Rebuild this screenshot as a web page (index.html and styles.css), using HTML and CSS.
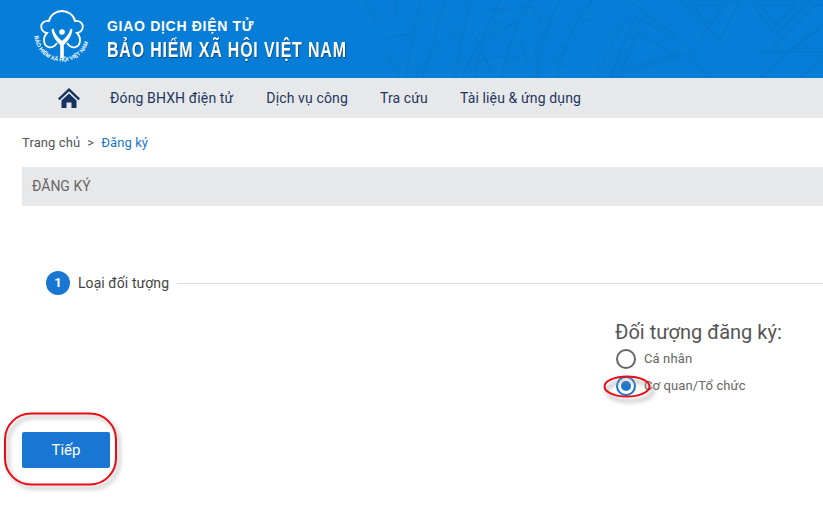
FILE: index.html
```html
<!DOCTYPE html>
<html lang="vi">
<head>
<meta charset="utf-8">
<title>Đăng ký</title>
<link rel="stylesheet" href="styles.css">
</head>
<body>
<header class="banner">
  <svg class="pattern" width="823" height="78" viewBox="0 0 823 78" fill="none" stroke="#0a77cb" stroke-width="1.200">
    <path d="M365 0l12 24M420 0l-6 30-8 48M445 0l-22 78M440 40l-25 38M470 0l-16 78M478 43l-16 35M395 0v20M380 40l30 -6M385 50l15 28"/>
    <path d="M460 45l-16-24M500 0c-14 26-22 50-25 78M530 0c-16 26-24 50-28 78M472 30l22 48"/>
    <path d="M483 10l50-3 12 24-10 20 5 27M495 20l30 10M490 40l25-18M505 50l15 10M520 40l10 25M480 60l30-5"/>
    <path d="M560 0c-12 22-20 50-24 78M592 0c-18 22-30 50-34 78M575 15l14 6M565 30l14 6M558 45l14 6M553 60l14 6"/>
    <path d="M610 78l25-62 60 35zM622 70l15-38 38 22zM600 78l-3-6 30-55M628 0l47 35M680 0l60 0-20 40zM692 5l30 0-12 22zM730 0l-30 38"/>
    <path d="M750 0l60 0-35 35zM760 5l36 0-20 20zM770 50l45-45 8 0M760 78l63-55M800 78l23-18M760 52l63 0M690 60l20 18"/>
    <path d="M820 30l-30 18 33 0"/>
  </svg>
  <svg class="logo" width="64" height="64" viewBox="0 0 64 64" aria-hidden="true">
    <defs><path id="ring" d="M1.500 28a27.500 27.500 0 0 0 55 0"/></defs>
    <path d="M24 37C19 44 11 42 11 34C11 31 12 29 14 27C6 26 6 14 16 15C17 9 23 5 29 5C35 5 41 9 42 15C52 14 52 26 44 27C46 29 47 31 47 34C47 42 39 44 34 37" fill="none" stroke="#fff" stroke-width="1.800"/>
    <path d="M18.500 23.500L20.500 22.500C22 29 26 32 29 35C32 32 36 29 37.500 22.500L39.500 23.500C38.500 31 34 36 30.800 39V52H27.200V39C24 36 19.500 31 18.500 23.500z" fill="#fff"/>
    <circle cx="29" cy="26" r="2.800" fill="#fff"/>
    <text class="logo-ring" fill="#fff"><textPath href="#ring" startOffset="2">BẢO HIỂM XÃ HỘI VIỆT NAM</textPath></text>
  </svg>
  <div class="brand">
    <div class="brand-top">GIAO DỊCH ĐIỆN TỬ</div>
    <div class="brand-main">BẢO HIỂM XÃ HỘI VIỆT NAM</div>
  </div>
</header>

<nav class="menu">
  <svg class="home" width="22" height="20" viewBox="0 0 22 20" aria-hidden="true">
    <path d="M11 0L0 10.500l1.600 1.700L11 3.300l9.400 8.900 1.600-1.700z" fill="#14315f"/>
    <path d="M3.500 12.500L11 5.500l7.500 7V20h-5v-5.500h-5V20h-5z" fill="#14315f"/>
  </svg>
  <a class="menu-item">Đóng BHXH điện tử</a>
  <a class="menu-item">Dịch vụ công</a>
  <a class="menu-item">Tra cứu</a>
  <a class="menu-item">Tài liệu &amp; ứng dụng</a>
</nav>

<main class="content">
  <div class="crumbs"><span>Trang chủ</span><span class="sep">&gt;</span><span class="current">Đăng ký</span></div>
  <h1 class="title">ĐĂNG KÝ</h1>
  <div class="step">
    <span class="step-num">1</span>
    <span class="step-label">Loại đối tượng</span>
    <span class="step-line"></span>
  </div>
  <div class="form-row">
    <div class="choices">
      <div class="choices-title">Đối tượng đăng ký:</div>
      <div class="radio-row"><span class="radio"></span><span>Cá nhân</span></div>
      <div class="radio-row"><span class="radio on"></span><span>Cơ quan/Tổ chức</span></div>
    </div>
  </div>
  <button class="next">Tiếp</button>
</main>

<svg class="marks" width="823" height="507" viewBox="0 0 823 507" fill="none" aria-hidden="true">
  <defs><filter id="soft" x="-20%" y="-30%" width="140%" height="170%"><feGaussianBlur stdDeviation="2"/></filter></defs>
  <rect x="8" y="417" width="111" height="71" rx="26" stroke="#9a9a9a" stroke-width="3" opacity=".55" filter="url(#soft)"/>
  <rect x="5" y="413.500" width="111" height="71" rx="26" stroke="#ee0a14" stroke-width="2"/>
  <ellipse cx="630" cy="391" rx="23" ry="10" stroke="#8a8a8a" stroke-width="3" opacity=".55" filter="url(#soft)"/>
  <ellipse cx="627" cy="386.500" rx="22.500" ry="10" stroke="#ee0a14" stroke-width="2"/>
</svg>
</body>
</html>
```
FILE: styles.css
```css
* { box-sizing: border-box; }
html, body { margin: 0; padding: 0; }
body {
  width: 823px;
  height: 507px;
  overflow: hidden;
  position: relative;
  background: #fff;
  font-family: Roboto, "Liberation Sans", sans-serif;
  color: #444;
}
.banner {
  position: relative;
  height: 78px;
  background: #067dd6;
  display: flex;
  align-items: center;
  padding-left: 33px;
  gap: 10px;
}
.pattern { position: absolute; left: 0; top: 0; }
.logo { position: relative; flex: none; margin-top: -3px; }
.logo-ring { font: bold 5.500px "Liberation Sans", sans-serif; }
.brand { position: relative; color: #fff; margin-top: 1px; }
.brand-top {
  font: bold 14px/18px "Liberation Sans", sans-serif;
  letter-spacing: .7px;
  margin-bottom: 3px;
}
.brand-main {
  font: bold 22px/24px "Liberation Sans", sans-serif;
  letter-spacing: 1.150px;
  text-shadow: 1px 1px 1px #10487a;
  white-space: nowrap;
  transform: scaleX(.725);
  transform-origin: left center;
}
.menu {
  height: 40px;
  background: #e7e8ea;
  display: flex;
  align-items: center;
  padding-left: 58px;
}
.home { margin-right: 30px; flex: none; }
.menu-item {
  font-size: 14px;
  letter-spacing: .13px;
  color: #1d3761;
  margin-right: 32px;
  white-space: nowrap;
}
.menu-item:first-of-type { margin-right: 33px; }
.content { padding: 0 0 0 22px; }
.crumbs {
  height: 49px;
  display: flex;
  align-items: center;
  font-size: 13px;
  letter-spacing: .1px;
  color: #555;
}
.sep { margin: 0 7px; }
.current { color: #1976d2; }
.title {
  margin: 0;
  height: 39px;
  padding-left: 10px;
  background: #e7e8ea;
  font-size: 14px;
  font-weight: 400;
  line-height: 39px;
  color: #666;
}
.step {
  display: flex;
  align-items: center;
  margin-top: 65px;
  padding-left: 24px;
  height: 24px;
}
.step-num {
  width: 24px;
  height: 24px;
  border-radius: 50%;
  background: #1976d2;
  color: #fff;
  font-size: 13px;
  font-weight: 700;
  line-height: 24px;
  text-align: center;
  flex: none;
}
.step-label { margin: 0 8px; font-size: 14px; letter-spacing: .07px; color: #444; white-space: nowrap; }
.step-line { flex: 1; height: 1px; background: #ddd; }
.form-row { display: flex; padding-left: 593px; margin-top: 24px; }
.choices { width: 208px; }
.choices-title { font-size: 20px; line-height: 26px; color: #555; white-space: nowrap; }
.radio-row {
  display: flex;
  align-items: center;
  gap: 8px;
  height: 27px;
  font-size: 13px;
  letter-spacing: .12px;
  color: #666;
  white-space: nowrap;
}
.radio {
  width: 20px;
  height: 20px;
  border: 2px solid #666;
  border-radius: 50%;
  flex: none;
  margin-left: 1px;
}
.radio.on {
  border-color: #1976d2;
  position: relative;
}
.radio.on::after {
  content: "";
  position: absolute;
  inset: 3px;
  border-radius: 50%;
  background: #1976d2;
}
.next {
  display: block;
  margin-top: 33px;
  width: 88px;
  height: 36px;
  border: 0;
  border-radius: 2px;
  background: #1976d2;
  color: #fff;
  font: 400 15px Roboto, sans-serif;
}
.marks { position: absolute; left: 0; top: 0; pointer-events: none; }
```
